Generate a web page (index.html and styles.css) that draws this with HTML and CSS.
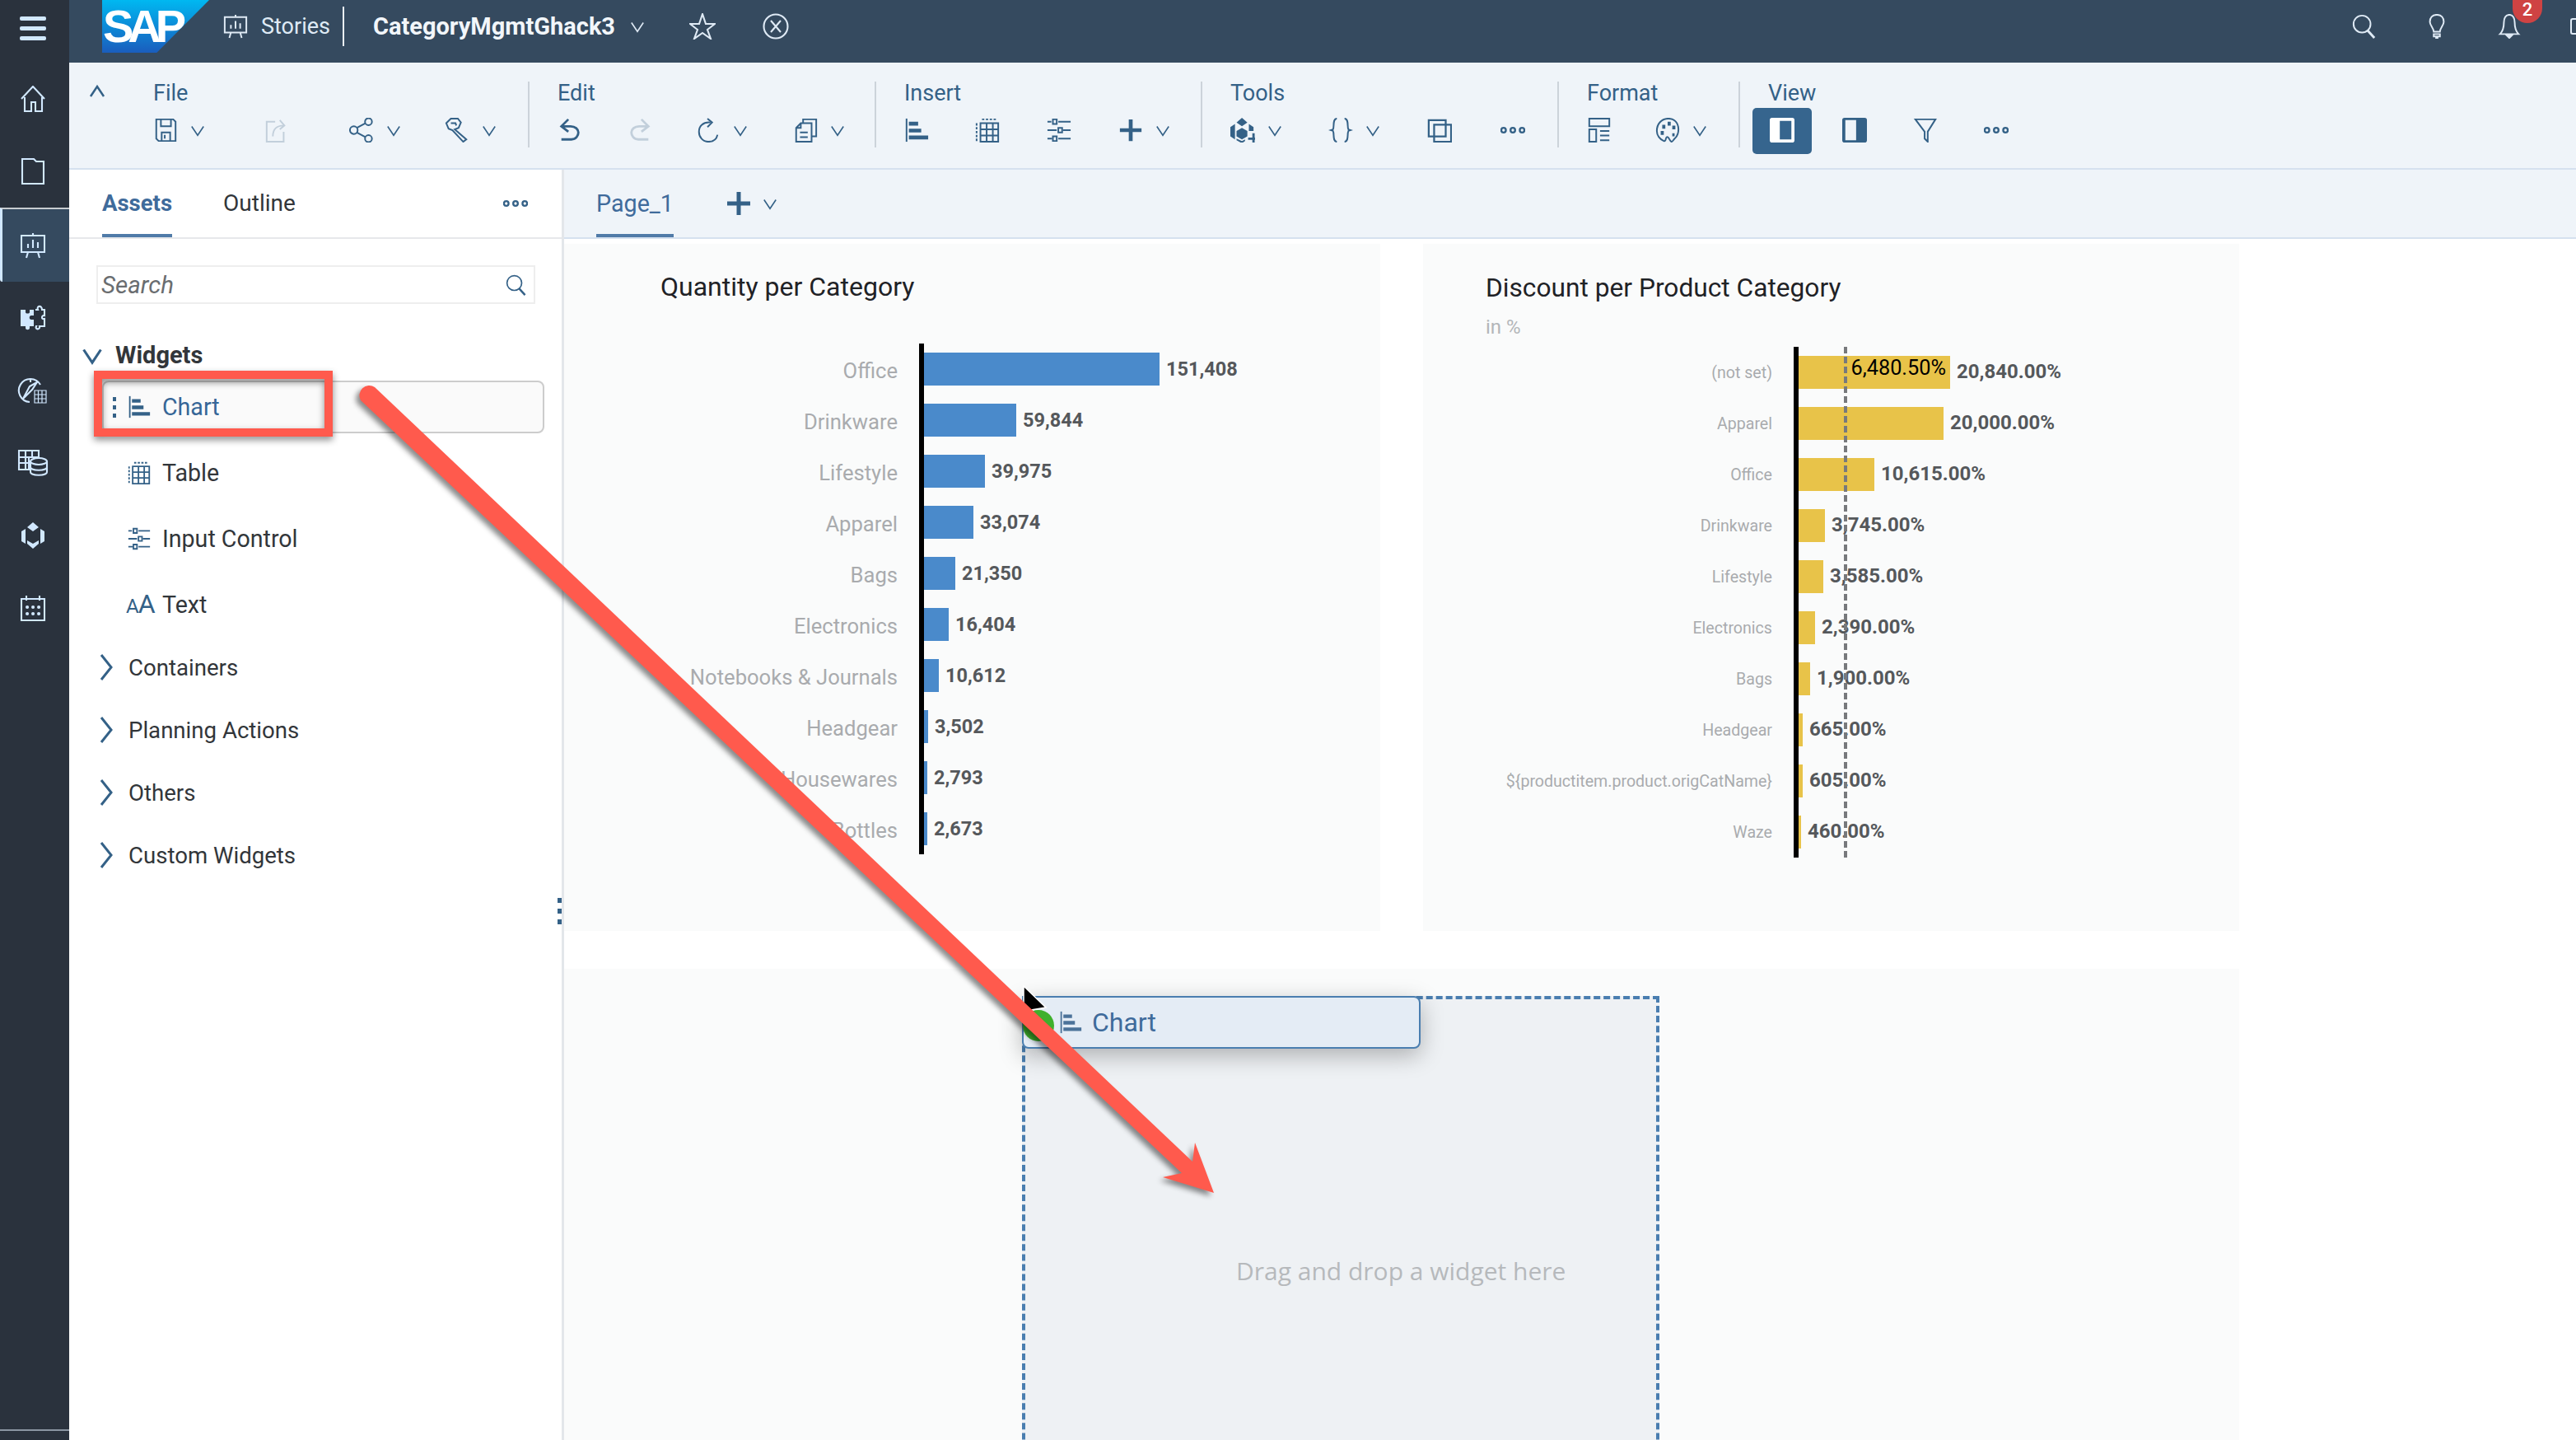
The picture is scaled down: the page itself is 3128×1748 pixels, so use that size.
FILE: index.html
```html
<!DOCTYPE html>
<html lang="en">
<head>
    <meta charset="UTF-8">
    <title>CategoryMgmtGhack3 - Stories</title>
    <link rel="stylesheet" href="styles.css">
</head>
<body>
    <!-- icon sheet -->
    <svg class="icon-sheet" xmlns="http://www.w3.org/2000/svg">
        <symbol id="i-chart" viewBox="0 0 32 32"><path d="M3 1v30"/><path class="f" d="M6 5h12v5H6zM6 14h16v5H6zM6 23h25v5H6z"/></symbol>
        <symbol id="i-table" viewBox="0 0 32 32"><path d="M7 7h23v24H7zM7 15h23M7 23h23M15 7v24M23 7v24"/><path stroke-dasharray="3 2" d="M2 7v24M9 2h20"/></symbol>
        <symbol id="i-sliders" viewBox="0 0 32 32"><path d="M1 5h5M15 5h16M1 16h12M21 16h10M1 27h6M15 27h16"/><path d="M8 2h5v6H8zM15 13h5v6h-5zM8 24h5v6H8z"/></symbol>
        <symbol id="i-plus" viewBox="0 0 32 32"><path class="thick" d="M16 2v28M2 16h28"/></symbol>
        <symbol id="i-chev" viewBox="0 0 20 20"><path d="M2 5l8 12 8-12"/></symbol>
        <symbol id="i-chev-r" viewBox="0 0 16 34"><path d="M2 2l12 15L2 32"/></symbol>
        <symbol id="i-save" viewBox="0 0 32 32"><path d="M4 2h22l3 3v25H7l-3-3zM10 2v9h13V2M11 30V19h11v11M15 22v5"/></symbol>
        <symbol id="i-export" viewBox="0 0 32 32"><path d="M14 5H3v26h22V18M11 24c0-9 5-14 14-14M20 3l6 7-6 5"/></symbol>
        <symbol id="i-share" viewBox="0 0 32 32"><circle cx="6" cy="16" r="5"/><circle cx="25" cy="5" r="4.500"/><circle cx="25" cy="27" r="4.500"/><path d="M10 13l11-6M10 19l11 6"/></symbol>
        <symbol id="i-wrench" viewBox="0 0 32 32"><path d="M2 7L8 1h9l4 5-3 7-5 2 15 13-4 3-14-15-5-2z"/><path d="M8 7h6l1 3"/></symbol>
        <symbol id="i-undo" viewBox="0 0 32 32"><path class="mid" d="M14 2L5 11l9 7M6 11h11c6 0 10 4 10 8s-3 9-9 9H5"/></symbol>
        <symbol id="i-redo" viewBox="0 0 32 32"><path class="mid" d="M18 2l9 9-9 7M26 11H15C9 11 5 15 5 19s3 9 9 9h13"/></symbol>
        <symbol id="i-refresh" viewBox="0 0 32 32"><path d="M19 6C9 5 4 11 4 18s5 13 12 13 11-4 12-9"/><path d="M15 1l6 5-6 6"/></symbol>
        <symbol id="i-copydoc" viewBox="0 0 32 32"><path d="M13 7V2h17v22h-6M4 13l6-6h14v24H4zM10 7v6H4M9 19h10M9 25h10"/></symbol>
        <symbol id="i-cube" viewBox="0 0 32 32"><path class="f" d="M15 0l7 6-7 5-7-5zM6 8L0 12v12l6 4V15zM24 8l6 4v5h-6zM15 13l7 4v7l-7 4-7-4v-7zM8 27l7 3 4-2v2l-4 3-7-4z"/><path class="mid" d="M30 34V20M23 27h15"/></symbol>
        <symbol id="i-braces" viewBox="0 0 32 32"><path d="M11 1C5 1 8 12 6 15l-3 1 3 1c2 3-1 14 5 14M21 1c6 0 3 11 5 14l3 1-3 1c-2 3 1 14-5 14"/></symbol>
        <symbol id="i-overlap" viewBox="0 0 32 32"><path class="mid2" d="M2 3h22v21H2zM9 9h22v22H9z"/></symbol>
        <symbol id="i-dots" viewBox="0 0 32 12"><circle cx="4" cy="6" r="3"/><circle cx="16" cy="6" r="3"/><circle cx="28" cy="6" r="3"/></symbol>
        <symbol id="i-layout" viewBox="0 0 32 32"><path d="M3 1h26v10H3zM3 15h9v16H3zM17 17h12M17 23h12M17 29h12"/></symbol>
        <symbol id="i-palette" viewBox="0 0 32 32"><path d="M17 1C8 1 2 8 2 17c0 6 4 11 9 13 3 1 2-4 4-5 3-1 3 5 6 6 2 0 3-4 5-5 3-3 4-7 4-11C30 7 25 1 17 1z"/><path class="f" d="M9 9h4v5H9zM16 5h4v5h-4zM22 10h4v5h-4zM7 17h4v5H7zM22 20h3v4h-3z"/></symbol>
        <symbol id="i-panel-l" viewBox="0 0 32 32"><path class="f" fill-rule="evenodd" d="M3 0h26a3 3 0 0 1 3 3v26a3 3 0 0 1-3 3H3a3 3 0 0 1-3-3V3a3 3 0 0 1 3-3zM13 4v24h15V4z"/></symbol>
        <symbol id="i-panel-r" viewBox="0 0 32 32"><path class="f" fill-rule="evenodd" d="M3 0h26a3 3 0 0 1 3 3v26a3 3 0 0 1-3 3H3a3 3 0 0 1-3-3V3a3 3 0 0 1 3-3zM4 3v26h14V3z"/></symbol>
        <symbol id="i-filter" viewBox="0 0 32 32"><path d="M3 2h26L19 18v13l-4-4V18z"/></symbol>
        <symbol id="i-search" viewBox="0 0 32 32"><ellipse cx="13" cy="13" rx="11" ry="11"/><path class="mid" d="M20 21l9 10"/></symbol>
        <symbol id="i-bulb" viewBox="0 0 32 32"><path d="M16 1c-6 0-9 4-9 9 0 5 5 8 5 13h8c0-5 5-8 5-13 0-5-3-9-9-9zM12 26h8v3h-8zM14 31h4"/></symbol>
        <symbol id="i-bell" viewBox="0 0 32 32"><path d="M16 1c-5 0-7 5-7 10 0 7-1 11-5 15h24c-4-4-5-8-5-15 0-5-2-10-7-10zM13 28h6l-3 3z"/></symbol>
        <symbol id="i-star" viewBox="0 0 32 32"><path d="M16 1l4 12h11l-9 7 4 11-10-7-10 7 4-11-9-7h11z"/></symbol>
        <symbol id="i-xcircle" viewBox="0 0 32 32"><circle cx="16" cy="16" r="14.500"/><path d="M10 9l12 14M22 9L10 23"/></symbol>
        <symbol id="i-stories" viewBox="0 0 32 32"><path d="M2 4h28v20H2zM16 1v3M10 24l-2 7M22 24l2 7M10 19v-5M16 19V9M22 19v-7"/></symbol>
        <symbol id="i-home" viewBox="0 0 32 32"><path d="M2 16L16 1l14 15M6 14v17h8V20h5v11h8V14"/></symbol>
        <symbol id="i-folder" viewBox="0 0 32 32"><path d="M3 1h14l3 3h9v27H3z"/></symbol>
        <symbol id="i-puzzle" viewBox="0 0 32 32"><path class="f" d="M1 6h6v3c0 2 5 2 5 0V6h5v7h-3c-3 0-3 5 0 5h3v8h-5v2c0 3-5 3-5 0v-2H1z"/><path d="M19 6h3c-2-5 5-6 5 0h3v7c-3-1-5 5 0 4v9h-6c1 5-6 4-4 0h-1"/></symbol>
        <symbol id="i-compass" viewBox="0 0 36 32"><path d="M27 9A14 14 0 1 0 14 30M6 26l11-11 6-9-9 5-8 15M15 2v4"/><path class="fine" d="M20 16h14v15H20zM20 21h14M20 26h14M24.500 16v15M29 16v15"/></symbol>
        <symbol id="i-dbtable" viewBox="0 0 36 32"><path d="M1 1h24v8H13v15H1zM1 9h12M1 16h12M9 1v23M17 1v8"/><ellipse cx="25" cy="14" rx="10" ry="4"/><path d="M15 14v13c0 5 20 5 20 0V14M15 21c0 5 20 5 20 0"/></symbol>
        <symbol id="i-pkg" viewBox="0 0 32 32"><path class="f" d="M16 0l7 6-7 5-7-5zM7 8L2 11v12l5 3V14zM25 8l5 3v12l-5 3V14zM9 22l7 4 7-4v4l-7 6-7-6z"/></symbol>
        <symbol id="i-calendar" viewBox="0 0 32 32"><path d="M2 5h28v26H2zM8 1v6M24 1v6"/><path class="thick-dots" d="M9 15h.1M16 15h.1M23 15h.1M9 23h.1M16 23h.1M23 23h.1"/></symbol>
    </svg>

    <div class="app">
        <nav class="rail">
            <div class="rail-burger"><span></span><span></span><span></span></div>
            <a class="rail-item rail-home"><svg class="ico"><use href="#i-home"/></svg></a>
            <a class="rail-item"><svg class="ico"><use href="#i-folder"/></svg></a>
            <a class="rail-item rail-active"><svg class="ico"><use href="#i-stories"/></svg></a>
            <a class="rail-item"><svg class="ico"><use href="#i-puzzle"/></svg></a>
            <a class="rail-item"><svg class="ico rail-wide"><use href="#i-compass"/></svg></a>
            <a class="rail-item"><svg class="ico rail-wide"><use href="#i-dbtable"/></svg></a>
            <a class="rail-item"><svg class="ico"><use href="#i-pkg"/></svg></a>
            <a class="rail-item"><svg class="ico"><use href="#i-calendar"/></svg></a>
            <div class="rail-foot"></div>
        </nav>

        <div class="main">
            <header class="topbar">
                <div class="sap-logo">SAP</div>
                <svg class="ico top-stories"><use href="#i-stories"/></svg>
                <span class="top-module">Stories</span>
                <span class="top-sep"></span>
                <span class="top-title">CategoryMgmtGhack3</span>
                <svg class="ico chev top-chev"><use href="#i-chev"/></svg>
                <svg class="ico top-star"><use href="#i-star"/></svg>
                <svg class="ico top-close"><use href="#i-xcircle"/></svg>
                <div class="top-right">
                    <svg class="ico"><use href="#i-search"/></svg>
                    <svg class="ico"><use href="#i-bulb"/></svg>
                    <div class="bell">
                        <svg class="ico"><use href="#i-bell"/></svg>
                        <span class="badge">2</span>
                    </div>
                    <span class="top-user"></span>
                </div>
            </header>

            <section class="toolbar">
                <div class="tb-collapse"><svg class="ico"><use href="#i-chev"/></svg></div>

                <div class="tb-group tb-file">
                    <div class="tb-label">File</div>
                    <div class="tb-tools">
                        <div class="tool"><svg class="ico"><use href="#i-save"/></svg><svg class="ico chev"><use href="#i-chev"/></svg></div>
                        <div class="tool off"><svg class="ico"><use href="#i-export"/></svg></div>
                        <div class="tool"><svg class="ico"><use href="#i-share"/></svg><svg class="ico chev"><use href="#i-chev"/></svg></div>
                        <div class="tool"><svg class="ico"><use href="#i-wrench"/></svg><svg class="ico chev"><use href="#i-chev"/></svg></div>
                    </div>
                </div>

                <div class="tb-group tb-edit">
                    <div class="tb-label">Edit</div>
                    <div class="tb-tools">
                        <div class="tool"><svg class="ico"><use href="#i-undo"/></svg></div>
                        <div class="tool off"><svg class="ico"><use href="#i-redo"/></svg></div>
                        <div class="tool"><svg class="ico"><use href="#i-refresh"/></svg><svg class="ico chev"><use href="#i-chev"/></svg></div>
                        <div class="tool"><svg class="ico"><use href="#i-copydoc"/></svg><svg class="ico chev"><use href="#i-chev"/></svg></div>
                    </div>
                </div>

                <div class="tb-group tb-insert">
                    <div class="tb-label">Insert</div>
                    <div class="tb-tools">
                        <div class="tool"><svg class="ico"><use href="#i-chart"/></svg></div>
                        <div class="tool"><svg class="ico"><use href="#i-table"/></svg></div>
                        <div class="tool"><svg class="ico"><use href="#i-sliders"/></svg></div>
                        <div class="tool"><svg class="ico"><use href="#i-plus"/></svg><svg class="ico chev"><use href="#i-chev"/></svg></div>
                    </div>
                </div>

                <div class="tb-group tb-tools-group">
                    <div class="tb-label">Tools</div>
                    <div class="tb-tools">
                        <div class="tool"><svg class="ico"><use href="#i-cube"/></svg><svg class="ico chev"><use href="#i-chev"/></svg></div>
                        <div class="tool"><svg class="ico"><use href="#i-braces"/></svg><svg class="ico chev"><use href="#i-chev"/></svg></div>
                        <div class="tool"><svg class="ico"><use href="#i-overlap"/></svg></div>
                        <div class="tool"><svg class="ico dots"><use href="#i-dots"/></svg></div>
                    </div>
                </div>

                <div class="tb-group tb-format">
                    <div class="tb-label">Format</div>
                    <div class="tb-tools">
                        <div class="tool"><svg class="ico"><use href="#i-layout"/></svg></div>
                        <div class="tool"><svg class="ico"><use href="#i-palette"/></svg><svg class="ico chev"><use href="#i-chev"/></svg></div>
                    </div>
                </div>

                <div class="tb-group tb-view">
                    <div class="tb-label">View</div>
                    <div class="tb-tools">
                        <div class="tool tool-on"><svg class="ico"><use href="#i-panel-l"/></svg></div>
                        <div class="tool"><svg class="ico"><use href="#i-panel-r"/></svg></div>
                        <div class="tool"><svg class="ico"><use href="#i-filter"/></svg></div>
                        <div class="tool"><svg class="ico dots"><use href="#i-dots"/></svg></div>
                    </div>
                </div>
            </section>

            <div class="content">
                <aside class="panel">
                    <div class="panel-tabs">
                        <span class="tab tab-on">Assets</span>
                        <span class="tab">Outline</span>
                        <svg class="ico dots panel-more"><use href="#i-dots"/></svg>
                    </div>
                    <div class="search">
                        <span>Search</span>
                        <svg class="ico"><use href="#i-search"/></svg>
                    </div>

                    <div class="tree-head tree-open">
                        <svg class="ico"><use href="#i-chev"/></svg>
                        <span>Widgets</span>
                    </div>
                    <ul class="widget-list">
                        <li class="widget widget-hover"><span class="grip"><i></i><i></i><i></i></span><svg class="ico"><use href="#i-chart"/></svg><span>Chart</span></li>
                        <li class="widget"><span class="grip"></span><svg class="ico"><use href="#i-table"/></svg><span>Table</span></li>
                        <li class="widget"><span class="grip"></span><svg class="ico"><use href="#i-sliders"/></svg><span>Input Control</span></li>
                        <li class="widget"><span class="grip"></span><span class="aa"><small>A</small>A</span><span>Text</span></li>
                    </ul>
                    <div class="tree-head"><svg class="ico"><use href="#i-chev-r"/></svg><span>Containers</span></div>
                    <div class="tree-head"><svg class="ico"><use href="#i-chev-r"/></svg><span>Planning Actions</span></div>
                    <div class="tree-head"><svg class="ico"><use href="#i-chev-r"/></svg><span>Others</span></div>
                    <div class="tree-head"><svg class="ico"><use href="#i-chev-r"/></svg><span>Custom Widgets</span></div>
                    <div class="splitter"><i></i><i></i><i></i></div>
                </aside>

                <div class="canvas">
                    <div class="page-tabs">
                        <span class="page-tab">Page_1</span>
                        <svg class="ico page-plus"><use href="#i-plus"/></svg>
                        <svg class="ico chev"><use href="#i-chev"/></svg>
                    </div>
                    <div class="sheet">
                        <div class="card card-qty">
                            <h2 class="card-title">Quantity per Category</h2>
                            <div class="chart">
                                <div class="row"><span class="cat">Office</span><div class="plot"><span class="bar" style="width:286px"></span><b>151,408</b></div></div>
                                <div class="row"><span class="cat">Drinkware</span><div class="plot"><span class="bar" style="width:112px"></span><b>59,844</b></div></div>
                                <div class="row"><span class="cat">Lifestyle</span><div class="plot"><span class="bar" style="width:74px"></span><b>39,975</b></div></div>
                                <div class="row"><span class="cat">Apparel</span><div class="plot"><span class="bar" style="width:60px"></span><b>33,074</b></div></div>
                                <div class="row"><span class="cat">Bags</span><div class="plot"><span class="bar" style="width:38px"></span><b>21,350</b></div></div>
                                <div class="row"><span class="cat">Electronics</span><div class="plot"><span class="bar" style="width:30px"></span><b>16,404</b></div></div>
                                <div class="row"><span class="cat">Notebooks &amp; Journals</span><div class="plot"><span class="bar" style="width:18px"></span><b>10,612</b></div></div>
                                <div class="row"><span class="cat">Headgear</span><div class="plot"><span class="bar" style="width:5px"></span><b>3,502</b></div></div>
                                <div class="row"><span class="cat">Housewares</span><div class="plot"><span class="bar" style="width:4px"></span><b>2,793</b></div></div>
                                <div class="row"><span class="cat">Bottles</span><div class="plot"><span class="bar" style="width:4px"></span><b>2,673</b></div></div>
                            </div>
                        </div>

                        <div class="card card-disc">
                            <h2 class="card-title">Discount per Product Category</h2>
                            <div class="card-sub">in %</div>
                            <div class="chart">
                                <div class="row"><span class="cat">(not set)</span><div class="plot"><span class="bar" style="width:184px"><em>6,480.50%</em></span><b>20,840.00%</b></div></div>
                                <div class="row"><span class="cat">Apparel</span><div class="plot"><span class="bar" style="width:176px"></span><b>20,000.00%</b></div></div>
                                <div class="row"><span class="cat">Office</span><div class="plot"><span class="bar" style="width:92px"></span><b>10,615.00%</b></div></div>
                                <div class="row"><span class="cat">Drinkware</span><div class="plot"><span class="bar" style="width:32px"></span><b>3,745.00%</b></div></div>
                                <div class="row"><span class="cat">Lifestyle</span><div class="plot"><span class="bar" style="width:30px"></span><b>3,585.00%</b></div></div>
                                <div class="row"><span class="cat">Electronics</span><div class="plot"><span class="bar" style="width:20px"></span><b>2,390.00%</b></div></div>
                                <div class="row"><span class="cat">Bags</span><div class="plot"><span class="bar" style="width:14px"></span><b>1,900.00%</b></div></div>
                                <div class="row"><span class="cat">Headgear</span><div class="plot"><span class="bar" style="width:5px"></span><b>665.00%</b></div></div>
                                <div class="row"><span class="cat">${productitem.product.origCatName}</span><div class="plot"><span class="bar" style="width:5px"></span><b>605.00%</b></div></div>
                                <div class="row"><span class="cat">Waze</span><div class="plot"><span class="bar" style="width:3px"></span><b>460.00%</b></div></div>
                                <span class="ref-line"></span>
                            </div>
                        </div>

                        <div class="card card-drop">
                            <div class="dropzone">
                                <span class="drop-hint">Drag and drop a widget here</span>
                                <div class="ghost">
                                    <span class="ghost-ok"></span>
                                    <svg class="ico"><use href="#i-chart"/></svg>
                                    <span>Chart</span>
                                </div>
                            </div>
                        </div>
                    </div>
                </div>
            </div>
        </div>
    </div>

    <!-- callouts drawn on top of the screenshot -->
    <svg class="callouts" viewBox="0 0 3128 1748" xmlns="http://www.w3.org/2000/svg">
        <path class="cursor" d="M1243 1197l0 36 9-7 18-3z"/>
        <rect class="callout-box" x="119" y="455" width="280" height="70"/>
        <path class="callout-arrow" d="M438 486a12 12 0 0 1 17-16L1448 1410l3-23 23 61-62-19 23-5z"/>
    </svg>
</body>
</html>
```

FILE: styles.css
```css
html, body {
    margin: 0;
    height: 1748px;
    overflow: hidden;
    background: #fff;
    font-family: Roboto, "Noto Sans", sans-serif;
    color: #32363a;
}
.icon-sheet {
    display: none;
}
.ico {
    width: 30px;
    height: 30px;
    flex: none;
    fill: none;
    stroke: currentColor;
    stroke-width: 2.100;
    overflow: visible;
}
symbol .f { fill: currentColor; stroke: none; }
symbol .thick { stroke-width: 5; }
symbol .mid { stroke-width: 3; }
symbol .mid2 { stroke-width: 2.400; }
symbol .fine { stroke-width: 1.200; }
symbol .thick-dots { stroke-width: 4; stroke-linecap: round; }
.ico.chev {
    width: 18px;
    height: 18px;
    stroke-width: 1.800;
}
.ico.dots {
    height: 12px;
    stroke-width: 2.500;
}

.app {
    display: flex;
    height: 1748px;
}

/* left rail */
.rail {
    width: 84px;
    flex: none;
    background: #2a323d;
    color: #d1e8ff;
    display: flex;
    flex-direction: column;
    position: relative;
}
.rail-burger {
    height: 76px;
    display: flex;
    flex-direction: column;
    gap: 7px;
    align-items: center;
    padding: 20px 4px 0 0;
    box-sizing: border-box;
}
.rail-burger span {
    width: 32px;
    height: 5px;
    border-radius: 2px;
    background: #d1e8ff;
}
.rail-item {
    height: 88px;
    display: flex;
    align-items: center;
    justify-content: center;
    box-sizing: border-box;
    padding-right: 4px;
}
.rail-item .ico { width: 32px; height: 32px; }
.rail-item .rail-wide { width: 38px; height: 32px; }
.rail-active {
    height: 90px;
    background: #354a5f;
    border-top: 2px solid #c8ccd0;
    border-left: 3px solid #d1e8ff;
    border-bottom-left-radius: 3px;
    padding-right: 7px;
}
.rail-foot {
    position: absolute;
    left: 0;
    right: 0;
    bottom: 11px;
    height: 2px;
    background: #8b96a3;
}

.main {
    flex: 1;
    min-width: 0;
    display: flex;
    flex-direction: column;
}

/* shell bar */
.topbar {
    height: 76px;
    flex: none;
    box-sizing: border-box;
    background: #354a5f;
    color: #dfeaf5;
    display: flex;
    align-items: center;
    padding: 0 0 12px 40px;
}
.sap-logo {
    align-self: flex-start;
    width: 130px;
    height: 64px;
    box-sizing: border-box;
    padding: 3px 0 0 1px;
    background: linear-gradient(#00b8f1, #1a5dbd);
    clip-path: polygon(0 0, 100% 0, 51% 100%, 0 100%);
    color: #fff;
    font: bold 56px/58px "Liberation Sans", sans-serif;
    letter-spacing: -7px;
}
.top-stories {
    margin-left: 17px;
    width: 30px;
    height: 32px;
}
.top-module {
    margin-left: 16px;
    font-size: 27px;
}
.top-sep {
    width: 2px;
    height: 48px;
    margin: 0 35px 0 15px;
    background: #eaf1f8;
}
.top-title {
    font-size: 29px;
    font-weight: 700;
    color: #f2f6fa;
}
.top-chev { margin-left: 18px; }
.top-star { margin-left: 54px; width: 32px; height: 32px; }
.top-close { margin-left: 57px; width: 32px; height: 32px; }
.top-right {
    margin: 0 -5px 0 auto;
    display: flex;
    align-items: center;
    gap: 58px;
}
.bell { position: relative; display: flex; }
.badge {
    position: absolute;
    left: 19px;
    top: -17px;
    width: 36px;
    height: 28px;
    border-radius: 0 0 18px 18px;
    background: #cf4343;
    color: #fff;
    font-size: 22px;
    font-weight: 500;
    text-align: center;
    line-height: 24px;
}
.top-user {
    width: 10px;
    height: 16px;
    border: 2px solid #dfeaf5;
    border-right: 0;
    border-radius: 3px 0 0 3px;
    margin-left: 1px;
}

/* ribbon */
.toolbar {
    height: 130px;
    flex: none;
    box-sizing: border-box;
    background: #eff4f9;
    border-bottom: 2px solid #d5e1ef;
    display: flex;
    align-items: flex-start;
    padding-top: 23px;
    color: #346187;
}
.tb-collapse {
    width: 102px;
    box-sizing: border-box;
    padding: 3px 0 0 24px;
}
.tb-collapse .ico {
    width: 20px;
    height: 20px;
    transform: scaleY(-1);
    stroke-width: 2.500;
}
.tb-group {
    height: 80px;
    box-sizing: border-box;
}
.tb-group + .tb-group {
    border-left: 2px solid #ccd3da;
    padding-left: 34px;
}
.tb-label {
    font-size: 27px;
    line-height: 28px;
    margin-bottom: 16px;
}
.tb-tools {
    display: grid;
    height: 30px;
    align-items: center;
}
.tool {
    display: flex;
    align-items: center;
    gap: 15px;
    height: 30px;
}
.tool.off { color: #c2cfdb; }
.tool-on {
    position: relative;
    z-index: 0;
    color: #fff;
}
.tool-on::before {
    content: "";
    position: absolute;
    left: -21px;
    top: -12px;
    width: 72px;
    height: 56px;
    z-index: -1;
    border-radius: 5px;
    background: #36658e;
}
.tool-on .ico { width: 30px; height: 32px; }
.tb-file { width: 455px; }
.tb-file .tb-tools { grid-template-columns: 135px 103px 116px 70px; }
.tb-edit { width: 421px; }
.tb-edit .tb-tools { grid-template-columns: 85px 83px 118px 70px; }
.tb-insert { width: 396px; }
.tb-insert .tb-tools { grid-template-columns: 86px 87px 87px 70px; }
.tb-tools-group { width: 433px; }
.tb-tools-group .tb-tools { grid-template-columns: 119px 120px 89px 60px; }
.tb-format { width: 220px; }
.tb-format .tb-tools { grid-template-columns: 83px 80px; }
.tb-view { padding-left: 33px; }
.tb-view .tb-tools {
    margin-left: 2px;
    grid-template-columns: 88px 86px 86px 60px;
}

.content {
    flex: 1;
    min-height: 0;
    display: flex;
}

/* assets panel */
.panel {
    width: 601px;
    flex: none;
    box-sizing: border-box;
    border-right: 3px solid #e3e6ea;
    position: relative;
    background: #fff;
}
.panel-tabs {
    height: 84px;
    box-sizing: border-box;
    border-bottom: 2px solid #e6e8eb;
    display: flex;
    align-items: flex-start;
    padding-left: 40px;
    gap: 62px;
    color: #346187;
}
.tab {
    font-size: 28px;
    height: 82px;
    box-sizing: border-box;
    padding-top: 24px;
    line-height: 34px;
    color: #32363a;
}
.tab-on {
    font-size: 27.500px;
    font-weight: 700;
    color: #3f6b9b;
    border-bottom: 4px solid #507ba8;
}
.panel-more {
    margin-left: auto;
    margin-right: 41px;
    margin-top: 35px;
}
.search {
    margin: 32px 32px 0 33px;
    height: 47px;
    box-sizing: border-box;
    border: 2px solid #eeeeee;
    display: flex;
    align-items: center;
    justify-content: space-between;
    padding: 0 8px 0 4px;
    font-size: 29.500px;
    font-style: italic;
    color: #6a6d70;
}
.search .ico { color: #346187; width: 26px; height: 26px; }
.tree-head {
    height: 40px;
    display: flex;
    align-items: center;
    margin-top: 36px;
    padding-left: 37px;
    gap: 19px;
    font-size: 27.600px;
}
.tree-head .ico {
    width: 16px;
    height: 34px;
    color: #346187;
    stroke-width: 3;
}
.tree-open {
    margin-top: 42px;
    padding-left: 15px;
    gap: 15px;
    font-size: 29px;
    font-weight: 700;
}
.tree-open .ico { width: 26px; height: 26px; stroke-width: 2.400; }
.widget-list {
    list-style: none;
    margin: 11px 0 24px 40px;
    padding: 0;
    display: flex;
    flex-direction: column;
    gap: 16px;
    width: 537px;
}
.widget-list + .tree-head { margin-top: 0; }
.widget {
    height: 64px;
    box-sizing: border-box;
    border: 2px solid transparent;
    border-radius: 8px;
    display: flex;
    align-items: center;
    padding-left: 11px;
    font-size: 28.600px;
}
.widget .ico { color: #346187; width: 28px; height: 28px; }
.widget > span:last-child { margin-left: 14px; }
.widget-hover {
    background: #fafafa;
    border-color: #cccccc;
    color: #366697;
}
.grip {
    width: 6px;
    margin-right: 12px;
    display: flex;
    flex-direction: column;
    gap: 5px;
}
.grip i {
    width: 4px;
    height: 5px;
    background: #346187;
}
.aa {
    color: #346187;
    width: 30px;
    font-size: 32px;
    letter-spacing: -1px;
    line-height: 32px;
    margin-left: -2px;
    font-weight: 400;
}
.aa small { font-size: 24px; }
.splitter {
    position: absolute;
    right: 0;
    top: 884px;
    display: flex;
    flex-direction: column;
    gap: 7px;
}
.splitter i {
    width: 5px;
    height: 6px;
    background: #346187;
}

/* story canvas */
.canvas {
    flex: 1;
    min-width: 0;
    display: flex;
    flex-direction: column;
    color: #346187;
}
.page-tabs {
    height: 84px;
    flex: none;
    box-sizing: border-box;
    background: #eff4f9;
    border-bottom: 2px solid #d5e1ef;
    display: flex;
    align-items: center;
    padding-left: 39px;
}
.page-tab {
    font-size: 28.700px;
    height: 82px;
    box-sizing: border-box;
    padding-top: 24px;
    line-height: 34px;
    border-bottom: 4px solid #507ba8;
    color: #3f6b9b;
}
.page-plus {
    margin-left: 63px;
    width: 32px;
    height: 32px;
}
.page-tabs .chev { margin-left: 13px; }
.sheet {
    flex: 1;
    min-height: 0;
    overflow: hidden;
    background: #fff;
    padding-top: 6px;
    display: grid;
    grid-template-columns: 991px 991px;
    grid-template-rows: 834px 1fr;
    column-gap: 52px;
    row-gap: 46px;
    color: #32363a;
}
.card {
    background: #fafbfb;
    min-height: 0;
}
.card-title {
    margin: 0;
    font-size: 32px;
    font-weight: 400;
    line-height: 40px;
    color: #1f2226;
}
.card-qty { padding-top: 32px; }
.card-qty .card-title { margin-left: 117px; }
.card-qty .chart { margin-top: 49px; }
.card-disc { padding-top: 34px; }
.card-disc .card-title { margin-left: 76px; font-size: 31.700px; }
.card-sub {
    margin: 15px 0 0 76px;
    font-size: 24px;
    line-height: 24px;
    color: #b3b6b9;
}
.card-disc .chart { margin-top: 12px; }
.chart {
    position: relative;
}
.row {
    display: flex;
    height: 62px;
}
.cat {
    box-sizing: border-box;
    flex: none;
    text-align: right;
    margin-right: 26px;
    padding-top: 3px;
    align-self: center;
    color: #a9abae;
    white-space: nowrap;
}
.card-qty .cat { width: 405px; font-size: 25.600px; }
.card-disc .cat { width: 424px; font-size: 19.600px; padding-top: 0; }
.plot {
    border-left: 6px solid #000;
    display: flex;
    align-items: center;
    gap: 8px;
    font-size: 23.500px;
    color: #55585b;
}
.plot b { font-weight: 700; white-space: nowrap; }
.card-disc .plot { font-size: 24px; }
.card-disc .plot b { margin-bottom: 2px; }
.bar {
    height: 40px;
    display: flex;
    justify-content: flex-end;
    box-sizing: border-box;
}
.card-qty .bar { background: #4a8acb; }
.card-disc .bar { background: #e8c349; }
.bar em {
    font-style: normal;
    color: #000;
    font-size: 25.300px;
    line-height: 30px;
    padding-right: 5px;
    white-space: nowrap;
}
.ref-line {
    position: absolute;
    left: 511px;
    top: 0;
    bottom: 0;
    border-left: 4px dashed #77797c;
}
.card-drop {
    grid-column: 1 / 3;
    padding: 33px 0 0 556px;
}
.dropzone {
    position: relative;
    width: 774px;
    height: 900px;
    box-sizing: border-box;
    border: 4px dashed #4a7eb0;
    background: #eef1f4;
    padding: 309px 0 0 256px;
    font-family: "Open Sans", sans-serif;
}
.drop-hint {
    font-size: 30px;
    color: #b6b9bc;
    white-space: nowrap;
}
.ghost {
    position: absolute;
    left: -4px;
    top: -4px;
    width: 484px;
    height: 64px;
    box-sizing: border-box;
    border: 2px solid #4a7eb0;
    border-radius: 8px;
    background: #e4ecf5;
    box-shadow: 0 8px 28px rgba(0, 0, 0, .28);
    display: flex;
    align-items: center;
    padding-left: 43px;
    gap: 12px;
    color: #3f6b9b;
    font-family: Roboto, sans-serif;
    font-size: 32px;
}
.ghost .ico { width: 28px; height: 30px; color: #4b7299; }
.ghost-ok {
    position: absolute;
    left: -1px;
    top: 15px;
    width: 38px;
    height: 38px;
    border-radius: 50%;
    background: #3fb02c;
}

/* annotations */
.callouts {
    position: absolute;
    left: 0;
    top: 0;
    width: 3128px;
    height: 1748px;
    pointer-events: none;
}
.callout-box {
    fill: none;
    stroke: #ff5a4d;
    stroke-width: 10;
    filter: drop-shadow(0 4px 4px rgba(0, 0, 0, .45));
}
.callout-arrow {
    fill: #ff5a4d;
    filter: drop-shadow(-4px 4px 3px rgba(0, 0, 0, .45));
}
.cursor {
    fill: #000;
    stroke: #fff;
    stroke-width: 1.500;
}
```
